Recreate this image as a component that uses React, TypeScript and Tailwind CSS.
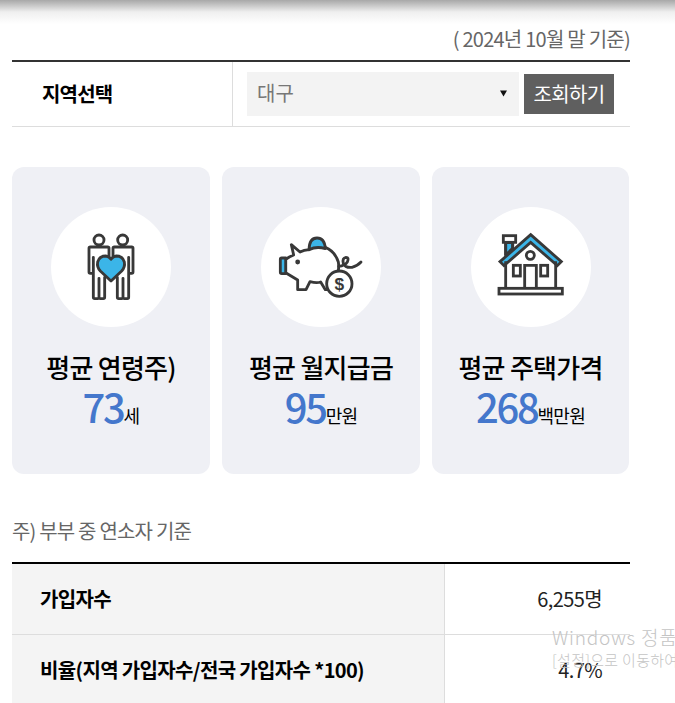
const line = "#383838"
const blue = "#3bb5e8"

function Couple() {
    return (
        <svg viewBox="33 21 360 360" className="w-[120px] h-[120px]" fill="none" stroke={line} strokeWidth="8.5" strokeLinejoin="round" strokeLinecap="round">
            <circle cx="177" cy="120" r="15" />
            <circle cx="248" cy="120" r="15" />
            <path d="M207 172V145Q207 141 203 141H151Q147 141 147 145V216Q147 220 151 220H160V172M160 220V292Q160 296 164 296H173Q177 296 177 292V235M177 292Q177 296 181 296H190Q194 296 194 292V232" />
            <path d="M219 172V145Q219 141 223 141H275Q279 141 279 145V216Q279 220 275 220H266V172M266 220V292Q266 296 262 296H253Q249 296 249 292V235M249 292Q249 296 245 296H236Q232 296 232 292V232" />
            <path fill={blue} d="M213 243L181 213Q170 201 173 186Q178 168 197 168Q207 169 213 178Q219 169 229 168Q248 168 253 186Q256 201 245 213Z" />
        </svg>
    )
}

function Piggy() {
    return (
        <svg viewBox="33 21 360 360" className="w-[120px] h-[120px]" fill="none" stroke={line} strokeWidth="8.5" strokeLinejoin="round" strokeLinecap="round">
            <path fill={blue} d="M177 149Q178 114 201 114Q224 114 226 146Q200 138 177 149Z" />
            <path d="M226 142Q254 153 265 186Q267 198 265 212M177 149Q162 150 150 156L124 134L131 165Q114 172 107 178V218L143 240V269H168L180 245Q200 250 212 246L226 269H238" />
            <path fill={blue} d="M107 174H95Q91 174 91 178V217Q91 221 95 221H107Z" />
            <circle cx="268" cy="251" r="38" fill="white" />
            <path d="M266 199Q285 197 292 186Q298 172 288 172Q276 174 280 190Q286 204 306 202Q322 198 333 186" />
            <circle cx="143" cy="186" r="3" fill={line} />
            <text x="268" y="270" textAnchor="middle" fontSize="52" fontWeight="700" fill={line} stroke="none" fontFamily="'Liberation Sans', sans-serif">$</text>
        </svg>
    )
}

function House() {
    return (
        <svg viewBox="33 21 360 360" className="w-[120px] h-[120px]" fill="none" stroke={line} strokeWidth="8.5" strokeLinejoin="miter">
            <path fill={blue} d="M137 128H158V145L137 165Z" />
            <path d="M137 128V165M158 128V145" />
            <rect x="130" y="107" width="37" height="20" fill="white" />
            <path fill={blue} d="M212 104L304 185L292 197L212 127L132 197L120 185Z" />
            <path d="M137 184V264M287 184V264" />
            <circle cx="211" cy="166" r="12" />
            <rect x="160" y="196" width="21" height="32" />
            <rect x="242" y="196" width="21" height="32" />
            <path d="M194 264V196H229V264" />
            <rect x="117" y="265" width="190" height="17" />
        </svg>
    )
}

const cards = [
    { title: "평균 연령주)", value: "73", unit: "세", icon: <Couple /> },
    { title: "평균 월지급금", value: "95", unit: "만원", icon: <Piggy /> },
    { title: "평균 주택가격", value: "268", unit: "백만원", icon: <House /> },
]

const rows = [
    { label: "가입자수", value: "6,255명" },
    { label: "비율(지역 가입자수/전국 가입자수 *100)", value: "4.7%" },
]

export default function App() {
    return (
        <div className="relative h-[703px] w-[675px] overflow-hidden bg-white font-['Noto_Sans_CJK_KR','Noto_Sans',sans-serif]">
            <div className="h-[24px] bg-gradient-to-b from-[#a8a8a8] via-[#efefef] to-white" />

            <div className="w-[618px] ml-3">
                <p className="h-[36px] text-right text-[20px] leading-[30px] tracking-[-0.75px] text-[#666]">( 2024년 10월 말 기준)</p>

                <div className="flex h-[67px] border-t-2 border-b border-t-[#333] border-b-[#ddd]">
                    <div className="flex w-[221px] items-center border-r border-[#ddd] pl-[30px] text-[20px] font-bold tracking-[-0.8px] text-black">지역선택</div>
                    <div className="flex items-center pl-[14px]">
                        <div className="flex h-[44px] w-[272px] items-center justify-between bg-[#f3f3f3] pb-[2px] pl-[10px] pr-[12px] text-[20px] text-[#777]">
                            대구
                            <svg viewBox="0 0 8 7" className="h-[7px] w-[7px]"><path d="M0 0H8L4 7Z" fill="#111" /></svg>
                        </div>
                        <button className="ml-[5px] h-[40px] w-[90px] bg-[#5f5f5f] text-[20px] tracking-[-0.6px] text-white">조회하기</button>
                    </div>
                </div>

                <div className="mt-[40px] flex gap-3">
                    {cards.map((card) => (
                        <div key={card.title} className="flex h-[307px] w-[198px] flex-col items-center rounded-xl bg-[#eff0f5] pt-[40px] last:w-[197px]">
                            <div className="flex h-[120px] w-[120px] items-center justify-center rounded-full bg-white">{card.icon}</div>
                            <p className="mt-[22px] text-[26px] leading-[36px] font-medium tracking-[-0.75px] text-black">{card.title}</p>
                            <p className="-mt-[3px] flex items-baseline leading-[48px] text-black">
                                <span className="text-[40px] font-medium tracking-[-2.3px] text-[#4477cc]">{card.value}</span>
                                <span className="text-[18px] tracking-[-0.8px]">{card.unit}</span>
                            </p>
                        </div>
                    ))}
                </div>

                <p className="mt-[42px] h-[46px] text-[20px] leading-[30px] tracking-[-0.8px] text-[#666]">주) 부부 중 연소자 기준</p>

                <div className="border-t-2 border-black">
                    {rows.map((row) => (
                        <div key={row.label} className="flex h-[71px] border-b border-[#ddd]">
                            <div className="flex w-[433px] items-center border-r border-[#ddd] bg-[#f4f4f4] pl-[28px] text-[20px] font-bold tracking-[-0.65px] text-black">{row.label}</div>
                            <div className="flex flex-1 items-center justify-end pr-[28px] text-[20px] tracking-[-0.6px] text-[#222]">{row.value}</div>
                        </div>
                    ))}
                </div>
            </div>

            <div className="absolute left-[552px] top-[624px] whitespace-nowrap font-light text-[#c4c4c4]">
                <p className="text-[19px] leading-[26px] tracking-[0.8px]">Windows 정품 인증</p>
                <p className="text-[15px] leading-[20px] tracking-[0.3px]">[설정]으로 이동하여 Windows를 정품 인증합니다.</p>
            </div>
        </div>
    )
}
